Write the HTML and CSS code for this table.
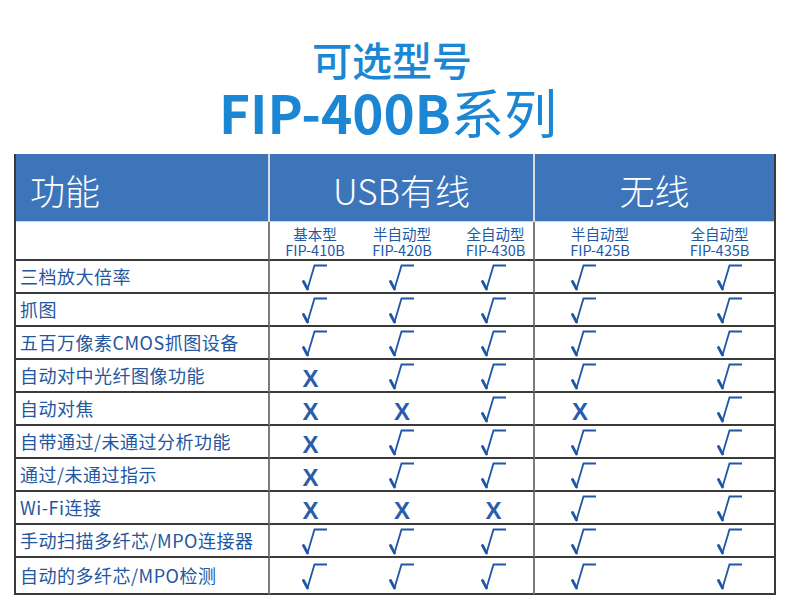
FILE: index.html
```html
<!DOCTYPE html>
<html lang="zh">
<head>
<meta charset="utf-8">
<link rel="stylesheet" href="styles.css">
</head>
<body>
<svg class="defs" width="0" height="0">
  <symbol id="chk" viewBox="0 0 26 27">
    <path d="M1.5 17.5 L5.5 25" stroke="#1f57a6" stroke-width="2.8" fill="none" stroke-linecap="round"/>
    <path d="M5.5 25 L12.5 1.5 L25 1.5" stroke="#1f57a6" stroke-width="1.8" fill="none" stroke-linejoin="miter"/>
  </symbol>
</svg>
<header class="title">
  <div class="t1">可选型号</div>
  <div class="t2"><b>FIP-400B</b>系列</div>
</header>
<div class="grid">
  <div class="h h-func">功能</div>
  <div class="h h-usb">USB有线</div>
  <div class="h h-wl">无线</div>

  <div class="s c0"></div>
  <div class="s c1"><p>基本型
FIP-410B</p></div>
  <div class="s c2"><p>半自动型
FIP-420B</p></div>
  <div class="s c3"><p>全自动型
FIP-430B</p></div>
  <div class="s c4"><p>半自动型
FIP-425B</p></div>
  <div class="s c5"><p>全自动型
FIP-435B</p></div>

  <div class="r c0">三档放大倍率</div>
  <div class="r c1"><svg class="ok"><use href="#chk"/></svg></div>
  <div class="r c2"><svg class="ok"><use href="#chk"/></svg></div>
  <div class="r c3"><svg class="ok"><use href="#chk"/></svg></div>
  <div class="r c4"><svg class="ok"><use href="#chk"/></svg></div>
  <div class="r c5"><svg class="ok"><use href="#chk"/></svg></div>

  <div class="r c0">抓图</div>
  <div class="r c1"><svg class="ok"><use href="#chk"/></svg></div>
  <div class="r c2"><svg class="ok"><use href="#chk"/></svg></div>
  <div class="r c3"><svg class="ok"><use href="#chk"/></svg></div>
  <div class="r c4"><svg class="ok"><use href="#chk"/></svg></div>
  <div class="r c5"><svg class="ok"><use href="#chk"/></svg></div>

  <div class="r c0">五百万像素CMOS抓图设备</div>
  <div class="r c1"><svg class="ok"><use href="#chk"/></svg></div>
  <div class="r c2"><svg class="ok"><use href="#chk"/></svg></div>
  <div class="r c3"><svg class="ok"><use href="#chk"/></svg></div>
  <div class="r c4"><svg class="ok"><use href="#chk"/></svg></div>
  <div class="r c5"><svg class="ok"><use href="#chk"/></svg></div>

  <div class="r c0">自动对中光纤图像功能</div>
  <div class="r c1"><span class="no">X</span></div>
  <div class="r c2"><svg class="ok"><use href="#chk"/></svg></div>
  <div class="r c3"><svg class="ok"><use href="#chk"/></svg></div>
  <div class="r c4"><svg class="ok"><use href="#chk"/></svg></div>
  <div class="r c5"><svg class="ok"><use href="#chk"/></svg></div>

  <div class="r c0">自动对焦</div>
  <div class="r c1"><span class="no">X</span></div>
  <div class="r c2"><span class="no">X</span></div>
  <div class="r c3"><svg class="ok"><use href="#chk"/></svg></div>
  <div class="r c4"><span class="no">X</span></div>
  <div class="r c5"><svg class="ok"><use href="#chk"/></svg></div>

  <div class="r c0">自带通过/未通过分析功能</div>
  <div class="r c1"><span class="no">X</span></div>
  <div class="r c2"><svg class="ok"><use href="#chk"/></svg></div>
  <div class="r c3"><svg class="ok"><use href="#chk"/></svg></div>
  <div class="r c4"><svg class="ok"><use href="#chk"/></svg></div>
  <div class="r c5"><svg class="ok"><use href="#chk"/></svg></div>

  <div class="r c0">通过/未通过指示</div>
  <div class="r c1"><span class="no">X</span></div>
  <div class="r c2"><svg class="ok"><use href="#chk"/></svg></div>
  <div class="r c3"><svg class="ok"><use href="#chk"/></svg></div>
  <div class="r c4"><svg class="ok"><use href="#chk"/></svg></div>
  <div class="r c5"><svg class="ok"><use href="#chk"/></svg></div>

  <div class="r c0">Wi-Fi连接</div>
  <div class="r c1"><span class="no">X</span></div>
  <div class="r c2"><span class="no">X</span></div>
  <div class="r c3"><span class="no">X</span></div>
  <div class="r c4"><svg class="ok"><use href="#chk"/></svg></div>
  <div class="r c5"><svg class="ok"><use href="#chk"/></svg></div>

  <div class="r c0">手动扫描多纤芯/MPO连接器</div>
  <div class="r c1"><svg class="ok"><use href="#chk"/></svg></div>
  <div class="r c2"><svg class="ok"><use href="#chk"/></svg></div>
  <div class="r c3"><svg class="ok"><use href="#chk"/></svg></div>
  <div class="r c4"><svg class="ok"><use href="#chk"/></svg></div>
  <div class="r c5"><svg class="ok"><use href="#chk"/></svg></div>

  <div class="r c0">自动的多纤芯/MPO检测</div>
  <div class="r c1"><svg class="ok"><use href="#chk"/></svg></div>
  <div class="r c2"><svg class="ok"><use href="#chk"/></svg></div>
  <div class="r c3"><svg class="ok"><use href="#chk"/></svg></div>
  <div class="r c4"><svg class="ok"><use href="#chk"/></svg></div>
  <div class="r c5"><svg class="ok"><use href="#chk"/></svg></div>
</div>
</body>
</html>
```
FILE: styles.css
```css
* { box-sizing: border-box; }
html, body { margin: 0; padding: 0; background: #fff; }
body {
  width: 790px;
  height: 616px;
  overflow: hidden;
  font-family: "Noto Sans CJK SC", "Noto Sans", sans-serif;
}
.defs { position: absolute; width: 0; height: 0; }

.title {
  padding-top: 35px;
  text-align: center;
  color: #1b86d3;
}
.t1 {
  font-size: 40px;
  line-height: 48px;
  font-weight: 500;
  padding-right: 6px;
}
.t2 {
  font-size: 53px;
  line-height: 57px;
  font-weight: 400;
  padding-right: 14px;
}
.t2 b { font-weight: 700; }

.grid {
  margin: 14px 0 0 14px;
  width: 762px;
  display: grid;
  grid-template-columns: 254px 88px 88px 89px 120px 119px;
  grid-template-rows: 68px 39px repeat(9, 33px) 37px;
  border-left: 2px solid #3a3a3a;
  border-right: 2px solid #3a3a3a;
}

.h {
  background: #3d75bb;
  color: #fff;
  font-size: 35px;
  font-weight: 300;
  display: flex;
  align-items: center;
  padding-top: 4px;
  border-bottom: 1px solid #c9d3e0;
}
.h-func { padding-left: 14px; border-right: 2px solid #d6dce6; }
.h-usb { grid-column: span 3; justify-content: center; border-right: 2px solid #d6dce6; }
.h-wl { grid-column: span 2; justify-content: center; }

.s {
  display: flex;
  align-items: center;
  justify-content: center;
  color: #2158a8;
  font-size: 14.5px;
  line-height: 16px;
  padding-top: 2px;
  border-bottom: 2px solid #3a3a3a;
}
.s p {
  margin: 0;
  white-space: pre-line;
  text-align: center;
}

.r {
  display: flex;
  align-items: center;
  justify-content: center;
  border-bottom: 2px solid #3a3a3a;
}
.r.c0 {
  justify-content: flex-start;
  padding-left: 4px;
  color: #23579f;
  font-size: 18px;
  letter-spacing: 0.5px;
  padding-bottom: 1px;
}
.c0 { border-right: 2px solid #7c7c7c; }
.c3 { border-right: 2px solid #7c7c7c; }

.r.c1 { padding-left: 2px; }
.r.c3 { padding-left: 8px; }
.r.c4 { padding-right: 22px; }
.r.c5 { padding-left: 30px; }
.s.c1 { padding-left: 2px; }
.s.c3 { padding-left: 12px; }
.s.c4 { padding-left: 10px; }
.s.c5 { padding-left: 10px; }

.ok {
  width: 26px;
  height: 27px;
  margin-top: 2px;
}
.no {
  font-family: "Liberation Sans", Arial, sans-serif;
  font-weight: 700;
  font-size: 24px;
  line-height: 24px;
  color: #2a5cad;
  margin-top: 6px;
}
.c1 .no { margin-right: 9px; }
.c4 .no { margin-right: 8px; }
```
